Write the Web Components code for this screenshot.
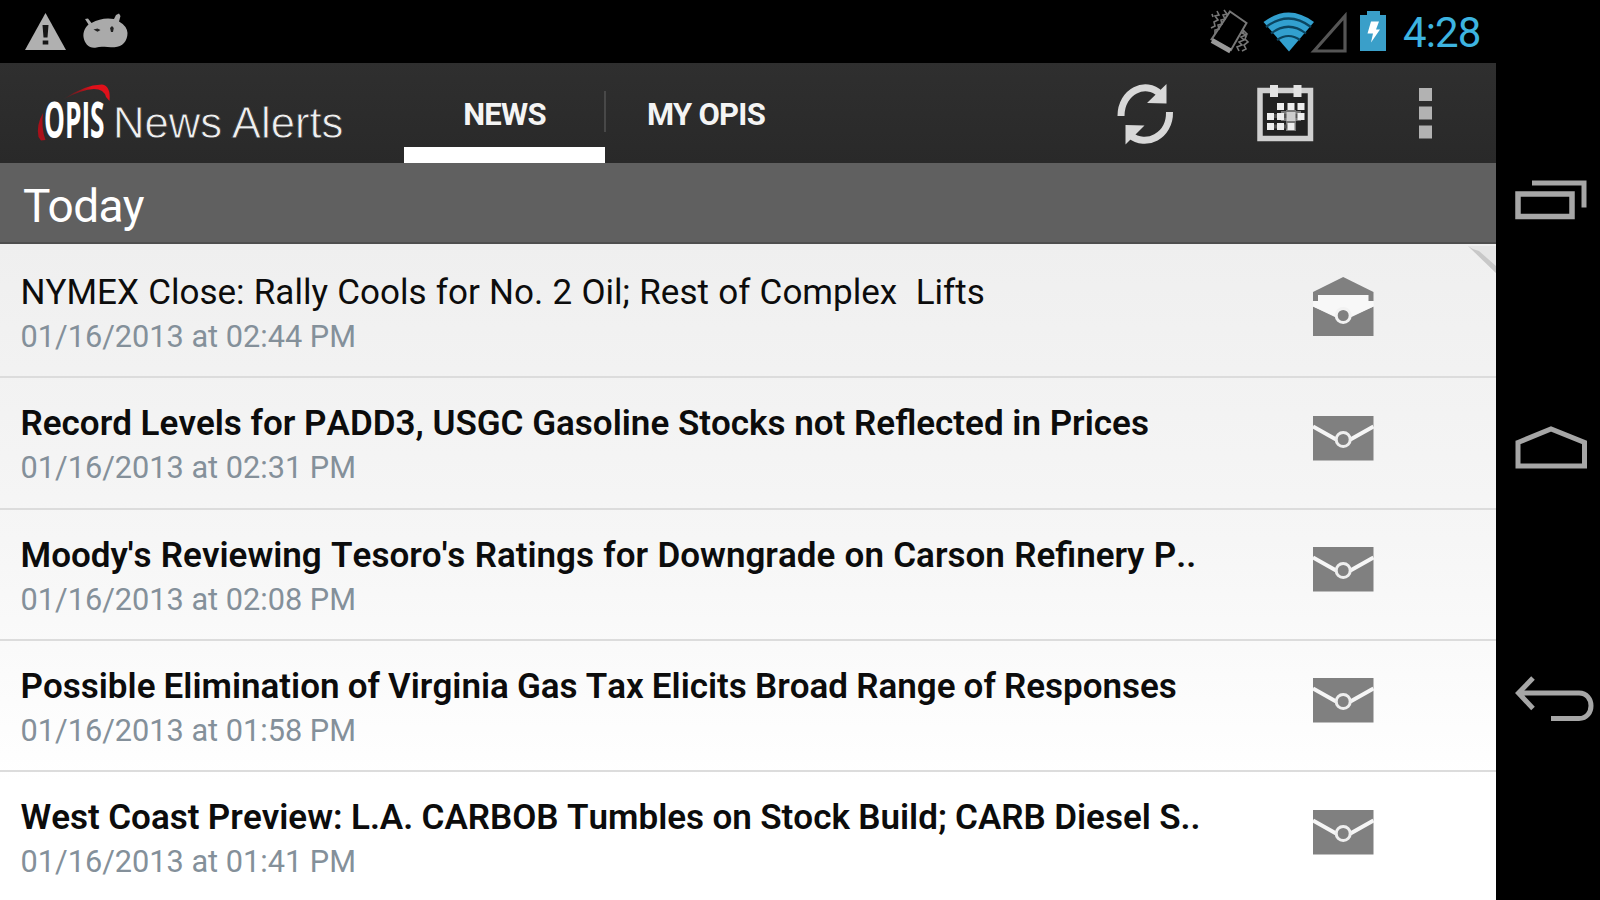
<!DOCTYPE html>
<html lang="en">
<head>
<meta charset="utf-8">
<title>OPIS News Alerts</title>
<style>
  body {
    margin: 0;
    background: #000;
    font-family: Roboto, 'Noto Sans', sans-serif;
  }
</style>
</head>
<body>
<alerts-device></alerts-device>

<script>
'use strict';

const alerts = [
  { title: 'NYMEX Close: Rally Cools for No. 2 Oil; Rest of Complex\u00a0 Lifts', date: '01/16/2013 at 02:44 PM', read: true, gap: '0.6px' },
  { title: 'Record Levels for PADD3, USGC Gasoline Stocks not Reflected in Prices', date: '01/16/2013 at 02:31 PM', gap: '0' },
  { title: 'Moody\'s Reviewing Tesoro\'s Ratings for Downgrade on Carson Refinery P..', date: '01/16/2013 at 02:08 PM', gap: '0.6px' },
  { title: 'Possible Elimination of Virginia Gas Tax Elicits Broad Range of Responses', date: '01/16/2013 at 01:58 PM', gap: '-0.6px' },
  { title: 'West Coast Preview: L.A. CARBOB Tumbles on Stock Build; CARB Diesel S..', date: '01/16/2013 at 01:41 PM', gap: '-0.3px' },
];

function attach(element, html) {
  const template = document.createElement('template');
  template.innerHTML = html;
  element.attachShadow({ mode: 'open' }).appendChild(template.content.cloneNode(true));
}

/* ---------- Status bar ---------- */
class StatusBar extends HTMLElement {
  constructor() {
    super();
    attach(this, `
      <style>
        :host {
          display: flex;
          justify-content: space-between;
          box-sizing: border-box;
          height: 63px;
          padding: 0 16px 0 20px;
          background: #000;
        }
        .group { display: flex; }
        svg { display: block; }
        time {
          width: 77px;
          margin-left: 12px;
          font-size: 42px;
          line-height: 66px;
          letter-spacing: -0.9px;
          color: #3db4e0;
          white-space: nowrap;
        }
      </style>
      <div class="group">
        <svg width="120" height="63" viewBox="20 0 120 63">
          <path d="M45.5 13 66 50H25z" fill="#b0b0b0"/>
          <path d="M42.5 25h6l-1 12.500h-4zM42.700 40.500h5.600v4h-5.600z" fill="#151515"/>
          <path d="M85 19l3-.5 3.500 4.500Q102 17 114 19L116 15l3-1.500 1.500 2.500-1.500 5.500Q127 26 127.500 33c0 8-5 14-13 14.200-8 0-14-1.400-18 .300-7 1.500-12-3.500-13-10.500-.5-5 1.500-9.500 5-12.500z" fill="#aaa"/>
          <path d="M93.500 29.500l4-1 3 1.500-3 1.800zM110 28l2-2 1.800 2-.8 4h-2z" fill="#222"/>
        </svg>
      </div>
      <div class="group">
        <svg width="185" height="63" viewBox="1206 0 185 63">
          <g fill="none" stroke="#777" stroke-width="2">
            <path d="M1230 11.500 1246.500 23 1231 50 1211.500 39.500z"/>
            <path d="M1212 40.500 1230.500 51" stroke="#999" stroke-width="5"/>
            <path d="M1224 10l3 4-4 1 2 4-4 1 1 4-4 1 1 4-4 1 0 4M1217 11l2 4-4 1 3 4-4 2 1 4-4 2M1212 14l1 3" stroke-width="1.600"/>
            <path d="M1245 31l-3 2 4 2-5 2 3 3-5 2 3 3-5 2 2 4M1243 30l4 4-2 5 3 3-4 3 2 4-4 2" stroke-width="1.600"/>
          </g>
          <path d="M1263.500 22Q1288.500 3 1314 22L1289 51.500z" fill="#32a0cf"/>
          <path d="M1266 27Q1288.500 10 1311 27M1271 33.500Q1288.500 20 1306 33.500M1277 40Q1288.500 32 1300 40" fill="none" stroke="#0b4560" stroke-width="2.200"/>
          <path d="M1314 51 1345 16V51z" fill="none" stroke="#555" stroke-width="3.200"/>
          <path d="M1360 15h7v-4h13v4h6v36h-26z" fill="#3a9fc9"/>
          <path d="M1371 21.500h8l-3 8h4l-9 13 2-9h-5.500z" fill="#fff"/>
        </svg>
        <time>4:28</time>
      </div>
    `);
  }
}
customElements.define('status-bar', StatusBar);

/* ---------- Logo ---------- */
class OpisLogo extends HTMLElement {
  constructor() {
    super();
    attach(this, `
      <style>
        :host { display: block; width: 404px; }
        svg { display: block; }
      </style>
      <svg width="404" height="100" viewBox="0 63 404 100">
        <defs>
          <linearGradient id="swoosh">
            <stop offset="0" stop-color="#c4000a" stop-opacity="0.15"/>
            <stop offset="0.600" stop-color="#e0101a"/>
          </linearGradient>
        </defs>
        <path d="M64 99Q84 85 102 84.500 111 86 109.500 101L106 97Q104 89 94 89 82 89.500 64 99z" fill="url(#swoosh)"/>
        <path d="M43 113Q36 125 38.500 137l2.500 3.500 4.500-.5Q41 128 43 113z" fill="#a8101a"/>
        <text transform="translate(44 138) scale(0.515 1)" font-family="Open Sans" font-weight="700" font-size="51" fill="#fff">OPIS</text>
        <text transform="translate(113 138) scale(0.970 1)" font-family="Liberation Sans" font-size="45" fill="#efefef" stroke="#2c2c2c" stroke-width="0.800">News Alerts</text>
      </svg>
    `);
  }
}
customElements.define('opis-logo', OpisLogo);

/* ---------- Tab ---------- */
class NavTab extends HTMLElement {
  constructor() {
    super();
    attach(this, `
      <style>
        :host {
          display: block;
          box-sizing: border-box;
          width: 201px;
          height: 100px;
          border-bottom: 16px solid transparent;
          text-align: center;
          font-size: 31px;
          font-weight: 700;
          line-height: 103px;
          letter-spacing: -0.7px;
          color: #f4f4f4;
        }
        :host([active]) {
          border-bottom-color: #fff;
        }
      </style>
      <slot></slot>
    `);
  }
}
customElements.define('nav-tab', NavTab);

/* ---------- Action bar ---------- */
class ActionBar extends HTMLElement {
  constructor() {
    super();
    attach(this, `
      <style>
        :host {
          display: flex;
          height: 100px;
          background: linear-gradient(#2f2f2f, #292929);
        }
        nav-tab:last-of-type { width: 200px; }
        .divider {
          width: 2px;
          height: 41px;
          margin: 28px 0 0 -1px;
          background: #484848;
        }
        .actions { margin-left: auto; }
        svg { display: block; }
      </style>
      <opis-logo></opis-logo>
      <nav-tab active>NEWS</nav-tab>
      <div class="divider"></div>
      <nav-tab>MY OPIS</nav-tab>
      <div class="actions">
        <svg width="396" height="100" viewBox="1100 63 396 100">
          <g fill="none" stroke="#d8d8d8" stroke-width="7">
            <path d="M1121 116C1121 91 1146 80 1160 94"/>
            <path d="M1169.500 112C1170 136 1146 148 1130 135"/>
          </g>
          <path d="M1166.500 84v19.500l-19.500-.5zM1125.500 144.500v-19.500l19 .500z" fill="#d8d8d8"/>
          <rect x="1260" y="90.500" width="50.500" height="48" fill="#222" stroke="#d0d0d0" stroke-width="5.500"/>
          <path d="M1270 85h8v12h-8zM1293.500 85h8v12h-8z" fill="#e2e2e2"/>
          <path d="M1286 110h10v21h-10zM1281 111h20v10h-20z" fill="#777"/>
          <path d="M1267 116h37M1267 126.500h24" stroke="#555" stroke-width="4"/>
          <path d="M1277 103h7v7h-7zM1287.500 103h7v7h-7zM1297.500 103h7v7h-7zM1267 113h7v7h-7zM1277 113h7v7h-7zM1297.500 113h7v7h-7zM1267 123h7v7h-7zM1277 123h7v7h-7zM1287.500 123h7v7h-7z" fill="#eee"/>
          <path d="M1286.500 112h9v9h-9z" fill="#ccc"/>
          <path d="M1419 88h13v13h-13zM1419 106.500h13v13h-13zM1419 125.500h13v13h-13z" fill="#b2b2b2"/>
        </svg>
      </div>
    `);
  }
}
customElements.define('action-bar', ActionBar);

/* ---------- Section header ---------- */
class SectionHeader extends HTMLElement {
  constructor() {
    super();
    attach(this, `
      <style>
        :host {
          display: block;
          box-sizing: border-box;
          height: 81px;
          padding-left: 23px;
          border-bottom: 2px solid #4e4e4e;
          background: #606060;
          font-size: 46px;
          line-height: 87px;
          letter-spacing: -0.6px;
          color: #fff;
        }
      </style>
      <slot></slot>
    `);
  }
}
customElements.define('section-header', SectionHeader);

/* ---------- Alert row ---------- */
const closedEnvelope = `
  <svg width="61" height="60" viewBox="0 0 61 60">
    <path d="M0 8h60.500v44.500H0z" fill="#808080"/>
    <path d="M0 18.500 24 32M60.500 18.500 36.500 32" stroke="#f6f6f6" stroke-width="4"/>
    <circle cx="30.200" cy="31.500" r="7" fill="#808080" stroke="#eee" stroke-width="3"/>
  </svg>`;

const openEnvelope = `
  <svg width="61" height="60" viewBox="0 0 61 60">
    <path d="M0 15 30.200 0 60.500 15v9H0z" fill="#808080"/>
    <path d="M5 18h50.500v6l5 2.500v5H0v-5L5 24z" fill="#f8f8f8"/>
    <path d="M0 29.500 30.200 44 60.500 29.500v29.500H0z" fill="#808080"/>
    <path d="M0 24h5l25 4 25.500-4h5v5.500L30.200 43 0 29.500z" fill="#f8f8f8"/>
    <circle cx="30.200" cy="38.500" r="7" fill="#808080" stroke="#f2f2f2" stroke-width="3"/>
  </svg>`;

class AlertRow extends HTMLElement {
  constructor() {
    super();
    attach(this, `
      <style>
        :host {
          display: flex;
          align-items: flex-start;
          justify-content: space-between;
          box-sizing: border-box;
          height: 131.330px;
          padding: 24px 122.500px 0 20.500px;
          border-bottom: 2px solid #dcdcdc;
          white-space: nowrap;
          font-kerning: none;
        }
        h2 {
          margin: 0;
          font-size: 35px;
          line-height: 44px;
          font-weight: 600;
          color: #0c0c0c;
        }
        :host([read]) h2 { font-weight: 400; }
        p {
          margin: 0;
          font-size: 30.700px;
          line-height: 44px;
          color: #84909a;
        }
        .icon { margin-top: 5.500px; }
        svg { display: block; }
      </style>
      <div>
        <h2></h2>
        <p></p>
      </div>
      <div class="icon"></div>
    `);
  }

  connectedCallback() {
    const title = this.shadowRoot.querySelector('h2');
    title.textContent = this.getAttribute('headline');
    title.style.wordSpacing = this.getAttribute('gap');
    this.shadowRoot.querySelector('p').textContent = this.getAttribute('date');
    this.shadowRoot.querySelector('.icon').innerHTML =
      this.hasAttribute('read') ? openEnvelope : closedEnvelope;
  }
}
customElements.define('alert-row', AlertRow);

/* ---------- Alert list ---------- */
class AlertList extends HTMLElement {
  constructor() {
    super();
    attach(this, `
      <style>
        :host {
          display: block;
          position: relative;
          height: 656px;
          padding-top: 3px;
          box-sizing: border-box;
          overflow: hidden;
          background: linear-gradient(#efefef, #f6f6f6 45%, #fff 82%);
        }
        .fold {
          position: absolute;
          top: 2px;
          right: 0;
        }
      </style>
      <svg class="fold" width="30" height="28" viewBox="0 0 30 28">
        <path d="M2 0h28v27z" fill="#e6e6e6"/>
        <path d="M2 0q5 4 11 5l17 15v7z" fill="#c8c8c8"/>
      </svg>
    `);
  }

  connectedCallback() {
    alerts.forEach((alert) => {
      const row = document.createElement('alert-row');
      row.setAttribute('headline', alert.title);
      row.setAttribute('date', alert.date);
      row.setAttribute('gap', alert.gap);
      if (alert.read) row.setAttribute('read', '');
      this.shadowRoot.appendChild(row);
    });
  }
}
customElements.define('alert-list', AlertList);

/* ---------- System keys ---------- */
class SystemKeys extends HTMLElement {
  constructor() {
    super();
    attach(this, `
      <style>
        :host {
          display: flex;
          flex-direction: column;
          box-sizing: border-box;
          width: 104px;
          height: 900px;
          padding: 170px 0 0 14px;
          gap: 188px;
          background: #000;
        }
        svg {
          display: block;
          fill: none;
          stroke: #a6a6a6;
          stroke-width: 5;
        }
      </style>
      <svg width="90" height="60" viewBox="1510 170 90 60">
        <path d="M1518 194h54v22.500h-54z" stroke-width="5.500"/>
        <path d="M1532 183h52v24.500"/>
      </svg>
      <svg width="90" height="60" viewBox="1510 418 90 60">
        <path d="M1518 442.500 1551 429l33.500 13.500v23.500H1518z"/>
      </svg>
      <svg width="90" height="60" viewBox="1510 666 90 60">
        <path d="M1533 678 1518.500 693 1533 708.500M1518 693h61c16 0 16 25.500 0 25.500h-28"/>
      </svg>
    `);
  }
}
customElements.define('system-keys', SystemKeys);

/* ---------- Device ---------- */
class AlertsDevice extends HTMLElement {
  constructor() {
    super();
    attach(this, `
      <style>
        :host {
          display: flex;
          width: 1600px;
          height: 900px;
          overflow: hidden;
        }
        main { width: 1496px; }
      </style>
      <main>
        <status-bar></status-bar>
        <action-bar></action-bar>
        <section-header>Today</section-header>
        <alert-list></alert-list>
      </main>
      <system-keys></system-keys>
    `);
  }
}
customElements.define('alerts-device', AlertsDevice);
</script>
</body>
</html>
